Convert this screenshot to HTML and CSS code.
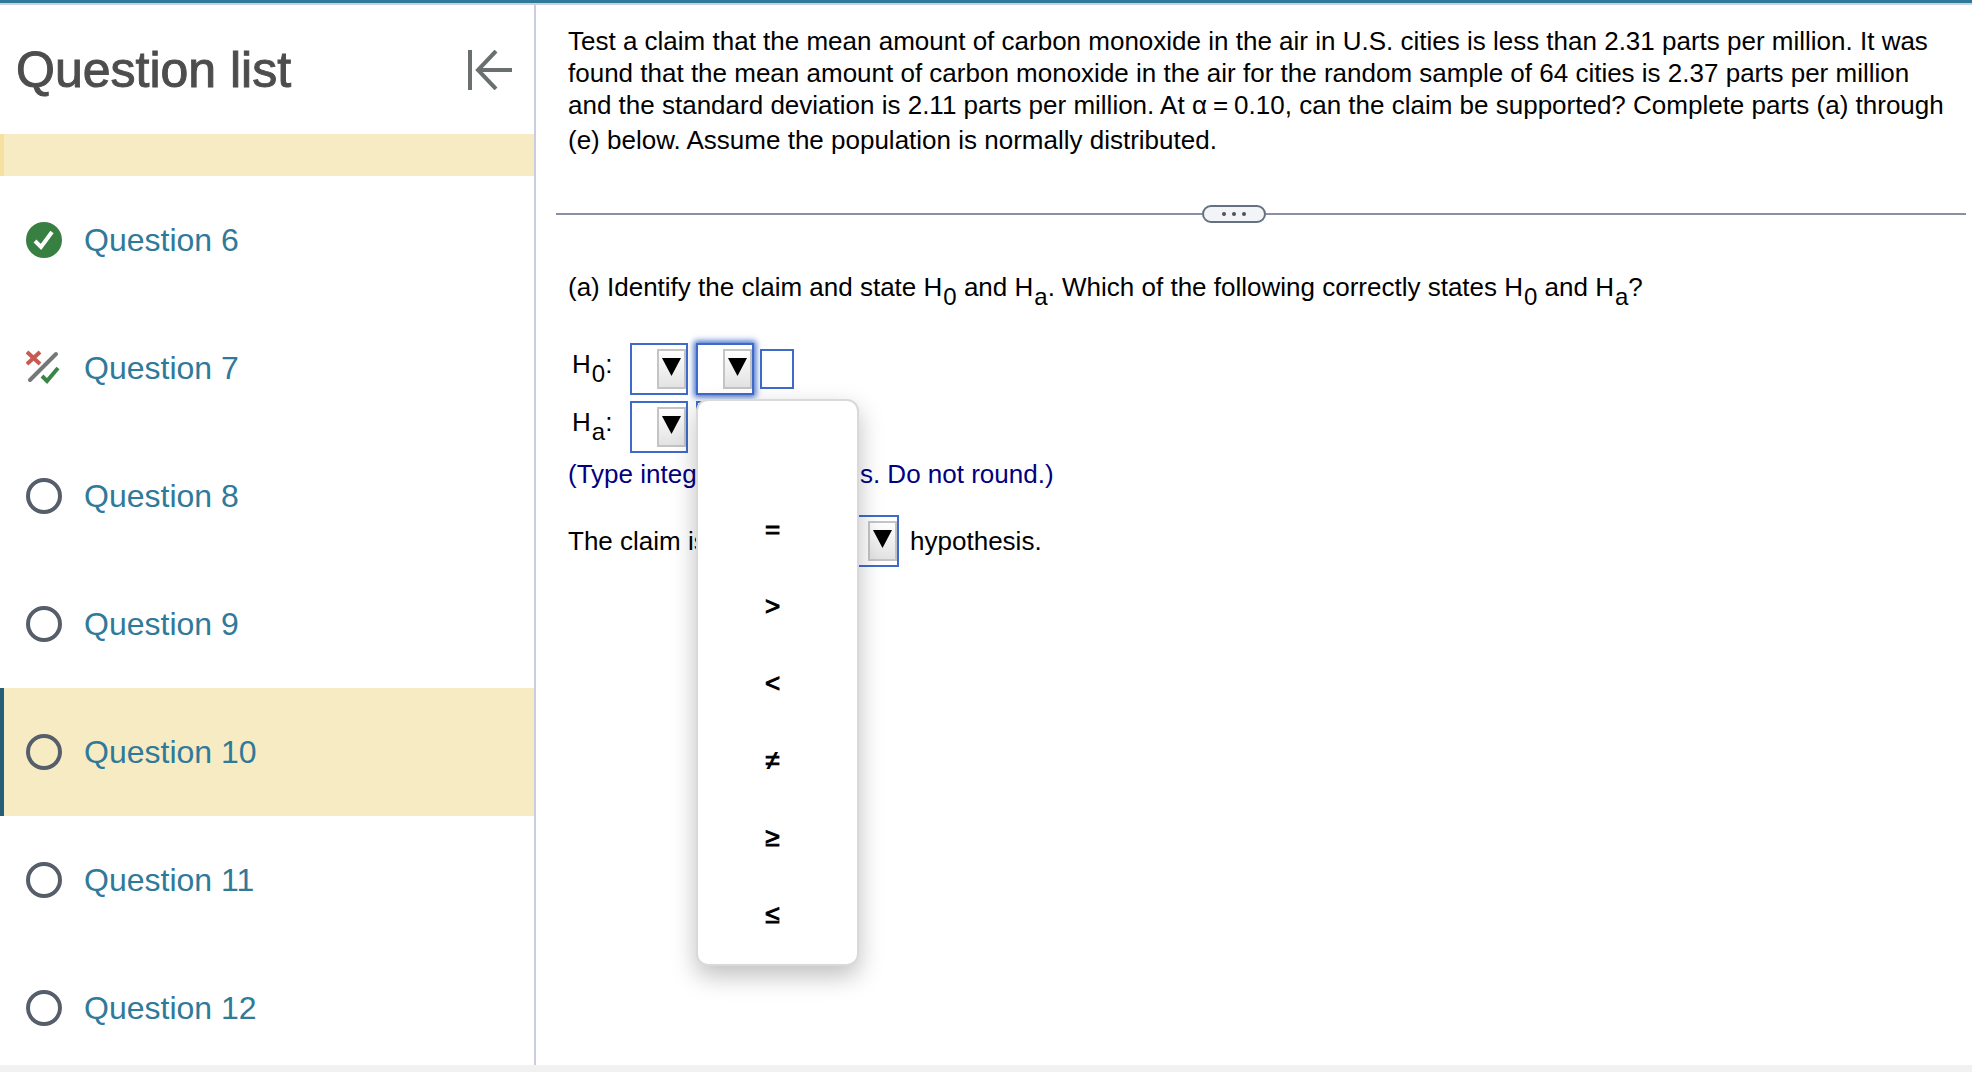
FILE: index.html
```html
<!DOCTYPE html>
<html lang="en">
<head>
  <meta charset="UTF-8" />
  <meta name="viewport" content="width=device-width, initial-scale=1.0" />
  <title>Question 10</title>
  <link rel="stylesheet" href="styles.css">
</head>
<body>
  <div class="topbar"></div>

  <div class="layout">
    <nav class="sidebar" aria-label="Question list">
      <div class="sidebar-header">
        <h1>Question list</h1>
        <button type="button" class="collapse" aria-label="Collapse question list">
          <svg width="44" height="40" viewBox="0 0 44 40" fill="none" stroke="#6a7070" stroke-width="4">
            <path d="M2 0V40" />
            <path d="M44 20H11" />
            <path d="M28 1L10 20L28 39" />
          </svg>
        </button>
      </div>

      <ul class="questions">
        <li class="scrolled"></li>
        <li>
          <a href="#q6">
            <svg width="36" height="36" viewBox="0 0 36 36" fill="none">
              <circle cx="18" cy="18" r="18" fill="#388041" />
              <path d="M9 19L15 25L26 10" stroke="#fff" stroke-width="4" />
            </svg>
            Question 6
          </a>
        </li>
        <li>
          <a href="#q7">
            <svg width="36" height="36" viewBox="0 0 36 36" fill="none" stroke-width="4">
              <path d="M1 2L14 14M14 2L1 14" stroke="#c75a52" />
              <path d="M4 30L30 4" stroke="#747878" stroke-linecap="round" />
              <path d="M16 26L21 31L32 18" stroke="#3a8545" />
            </svg>
            Question 7
          </a>
        </li>
        <li>
          <a href="#q8">
            <svg width="36" height="36" viewBox="0 0 36 36" fill="none"><circle cx="18" cy="18" r="16" stroke="#555e6a" stroke-width="4" /></svg>
            Question 8
          </a>
        </li>
        <li>
          <a href="#q9">
            <svg width="36" height="36" viewBox="0 0 36 36" fill="none"><circle cx="18" cy="18" r="16" stroke="#555e6a" stroke-width="4" /></svg>
            Question 9
          </a>
        </li>
        <li class="active">
          <a href="#q10" aria-current="page">
            <svg width="36" height="36" viewBox="0 0 36 36" fill="none"><circle cx="18" cy="18" r="16" stroke="#555e6a" stroke-width="4" /></svg>
            Question 10
          </a>
        </li>
        <li>
          <a href="#q11">
            <svg width="36" height="36" viewBox="0 0 36 36" fill="none"><circle cx="18" cy="18" r="16" stroke="#555e6a" stroke-width="4" /></svg>
            Question 11
          </a>
        </li>
        <li>
          <a href="#q12">
            <svg width="36" height="36" viewBox="0 0 36 36" fill="none"><circle cx="18" cy="18" r="16" stroke="#555e6a" stroke-width="4" /></svg>
            Question 12
          </a>
        </li>
      </ul>
    </nav>

    <main class="content">
      <p class="problem">Test a claim that the mean amount of carbon monoxide in the air in U.S. cities is less than 2.31 parts per million. It was found that the mean amount of carbon monoxide in the air for the random sample of 64 cities is 2.37 parts per million and the standard deviation is 2.11 parts per million. At <span class="math">α<span class="op">=</span>0.10</span>, can the claim be supported? Complete parts (a) through (e) below. Assume the population is normally distributed.</p>

      <div class="divider">
        <span class="line line-left"></span>
        <button type="button" class="more" aria-label="Show more">
          <svg width="24" height="4" viewBox="0 0 24 4" fill="#4d5158">
            <circle cx="2" cy="2" r="2" />
            <circle cx="12" cy="2" r="2" />
            <circle cx="22" cy="2" r="2" />
          </svg>
        </button>
        <span class="line line-right"></span>
      </div>

      <form class="part">
        <p class="prompt">(a) Identify the claim and state H<sub>0</sub> and H<sub>a</sub>. Which of the following correctly states H<sub>0</sub> and H<sub>a</sub>?</p>

        <div class="row">
          <label class="name" for="h0-param">H<sub>0</sub>:</label>
          <select id="h0-param"><option></option></select>
          <div class="dropdown">
            <select id="h0-sign" class="focused" aria-label="Null hypothesis sign"><option></option></select>
            <ul class="menu" role="listbox" aria-label="Signs">
              <li role="option"></li>
              <li role="option">=</li>
              <li role="option">&gt;</li>
              <li role="option">&lt;</li>
              <li role="option">≠</li>
              <li role="option">≥</li>
              <li role="option">≤</li>
            </ul>
          </div>
          <input type="text" id="h0-value" aria-label="Null hypothesis value">
        </div>

        <div class="row">
          <label class="name" for="ha-param">H<sub>a</sub>:</label>
          <select id="ha-param"><option></option></select>
          <select id="ha-sign" aria-label="Alternative hypothesis sign"><option></option></select>
          <input type="text" id="ha-value" aria-label="Alternative hypothesis value">
        </div>

        <p class="hint">(Type integers or decimals. Do not round.)</p>

        <div class="claim">
          <label for="claim">The claim is the</label>
          <select id="claim" class="wide"><option></option></select>
          <span>hypothesis.</span>
        </div>
      </form>
    </main>
  </div>

  <div class="bottombar"></div>
</body>
</html>
```
FILE: styles.css
```css
* {
  box-sizing: border-box;
}
body {
  font-family: "Liberation Sans", Arial, sans-serif;
  font-size: 26px;
  line-height: 32px;
  color: #000;
  background: #fff;
  margin: 0;
  height: 100vh;
  display: flex;
  flex-direction: column;
}
h1, p, ul {
  margin: 0;
  padding: 0;
}
ul {
  list-style: none;
}
.topbar {
  flex: none;
  height: 5px;
  background: #307a99;
  border-bottom: 2px solid #c9d0df;
}
.bottombar {
  flex: none;
  height: 7px;
  background: #f1f1f1;
}
.layout {
  flex: 1;
  min-height: 0;
  display: flex;
}

/* sidebar */
.sidebar {
  flex: none;
  width: 536px;
  border-right: 2px solid #cacddf;
  overflow: hidden;
}
.sidebar-header {
  display: flex;
  align-items: center;
  justify-content: space-between;
  height: 129px;
  padding: 0 22px 0 16px;
}
h1 {
  font-size: 50px;
  line-height: 60px;
  font-weight: normal;
  color: #4d4d4d;
  -webkit-text-stroke: 1px #4d4d4d;
}
.collapse {
  display: flex;
  padding: 0;
  border: none;
  background: none;
}
.questions li {
  height: 128px;
  border-left: 4px solid transparent;
}
.questions .scrolled {
  height: 42px;
  background: #f7ebc3;
  border-left-color: #f5e0a0;
}
.questions .active {
  background: #f7ebc3;
  border-left-color: #265f78;
}
.questions a {
  display: flex;
  align-items: center;
  gap: 22px;
  height: 100%;
  padding-left: 22px;
  font-size: 32px;
  color: #307a99;
  text-decoration: none;
}

/* question */
.content {
  flex: 1;
  min-width: 0;
  padding: 20px 6px 0 20px;
}
.problem {
  padding: 0 14px 0 12px;
}
/* makes the line with the formula a little taller */
.math::after {
  content: "";
  display: inline-block;
  height: 10px;
  vertical-align: -10px;
}
.op {
  margin: 0 6px;
}
.divider {
  display: flex;
  align-items: center;
  margin-top: 49px;
}
.line {
  height: 2px;
  background: #8a8fa3;
}
.line-left {
  flex: 12;
}
.line-right {
  flex: 13;
}
.more {
  display: flex;
  align-items: center;
  justify-content: center;
  width: 64px;
  height: 18px;
  padding: 0;
  border: 2px solid #657080;
  border-radius: 9px;
  background: #f3f4f7;
}
.part {
  padding: 0 12px;
}
.prompt {
  margin-top: 48px;
}
sub {
  margin-left: 1px;
  font-size: 24px;
  line-height: 0;
  vertical-align: -9px;
}
.row {
  display: flex;
  align-items: center;
  gap: 8px;
  margin-top: 6px;
}
.prompt + .row {
  margin-top: 40px;
}
.name {
  width: 54px;
  padding: 0 0 10px 4px;
}
select, input {
  height: 52px;
  width: 58px;
  padding: 0 30px 0 4px;
  border: 2px solid #3f6bc8;
  border-radius: 0;
  background-color: #fff;
  font: inherit;
}
select {
  appearance: none;
  background-image: url("data:image/svg+xml,%3Csvg xmlns='http://www.w3.org/2000/svg' width='29' height='40'%3E%3ClinearGradient id='g' x2='0' y2='1'%3E%3Cstop stop-color='%23fff'/%3E%3Cstop offset='1' stop-color='%23e2e2e2'/%3E%3C/linearGradient%3E%3Crect x='1' y='1' width='27' height='38' fill='url(%23g)' stroke='%23c4c4c4' stroke-width='2'/%3E%3Cpath d='M5 9H24L14.500 27Z'/%3E%3C/svg%3E");
  background-repeat: no-repeat;
  background-position: right center;
}
select.focused {
  box-shadow: 0 0 6px 2px #3f6bc8;
}
select.wide {
  width: 138px;
}
input {
  width: 34px;
  height: 40px;
  padding: 0 4px;
}
.dropdown {
  position: relative;
  display: flex;
}
.dropdown + input {
  margin-left: -2px;
}
.menu {
  position: absolute;
  z-index: 1;
  top: 56px;
  left: 0;
  width: 163px;
  padding: 13px 10px 11px 0;
  border: 2px solid #d9d9d9;
  border-radius: 12px;
  background: #fff;
  box-shadow: 0 10px 24px rgba(0, 0, 0, 0.25);
  text-align: center;
}
.menu li {
  height: 77px;
  line-height: 77px;
  -webkit-text-stroke: 1px #000;
}
.hint {
  margin-top: 5px;
  color: #000080;
}
.claim {
  display: flex;
  align-items: center;
  gap: 11px;
  margin-top: 25px;
}
```
